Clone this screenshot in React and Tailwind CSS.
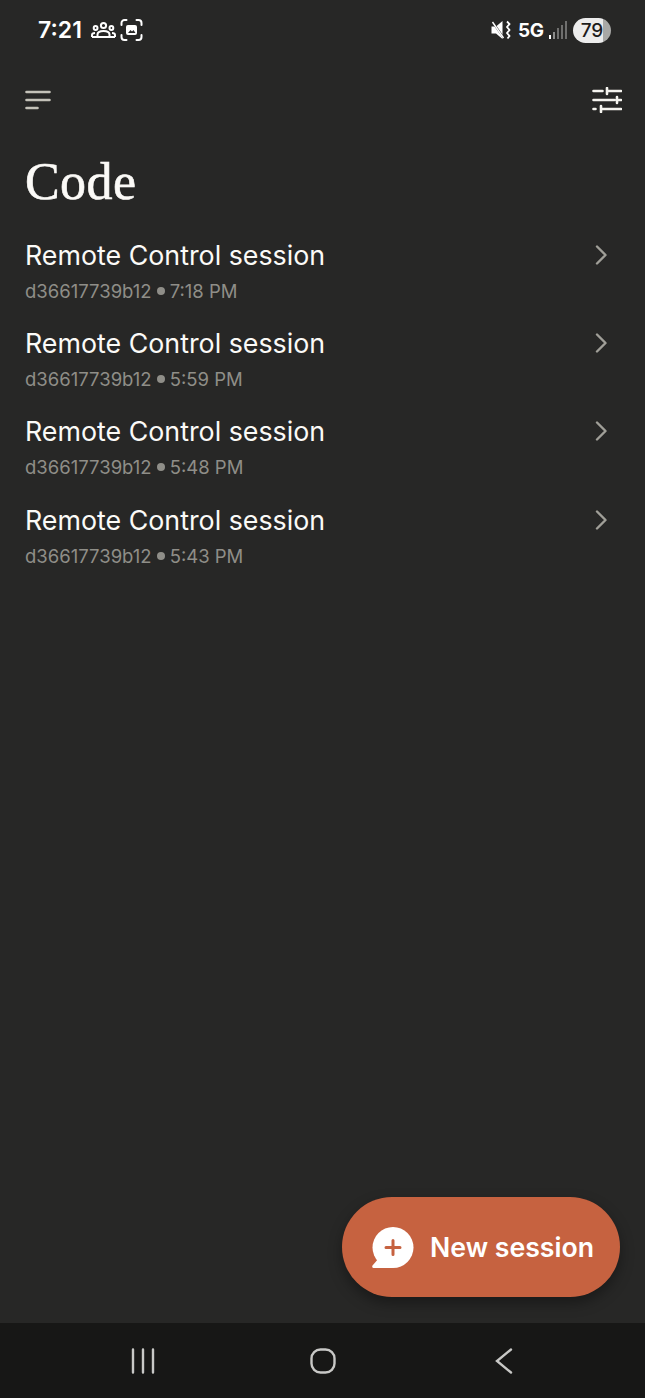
const sessions = [
  { id: 'd36617739b12', time: '7:18 PM' },
  { id: 'd36617739b12', time: '5:59 PM' },
  { id: 'd36617739b12', time: '5:48 PM' },
  { id: 'd36617739b12', time: '5:43 PM' },
]

function StatusBar() {
  return (
    <div className="h-[60px] flex items-center justify-between pl-[38px] pr-[34px] text-white font-['Inter',sans-serif]">
      <div className="flex items-center">
        <span className="text-[23px] font-semibold leading-none">7:21</span>
        {/* group icon */}
        <svg className="ml-[9px]" width="25" height="18" viewBox="0 0 25 18" fill="none" stroke="white" strokeWidth="2">
          <circle cx="12.5" cy="4.5" r="2.6" />
          <circle cx="4.6" cy="7" r="1.9" />
          <circle cx="20.4" cy="7" r="1.9" />
          <path d="M6.5 16v-2.5c0-2 2-3.5 6-3.5s6 1.500 6 3.500V16z" />
          <path d="M1 16v-2c0-1.200 1-2 3-2M24 16v-2c0-1.200-1-2-3-2M1 16h23" />
        </svg>
        {/* screenshot frame */}
        <svg className="ml-[4px]" width="23" height="22" viewBox="0 0 23 22" fill="none" stroke="white" strokeWidth="2" strokeLinecap="round">
          <path d="M1.500 6V4a3 3 0 0 1 3-3h2M16.500 1h2a3 3 0 0 1 3 3v2M21.500 16v2a3 3 0 0 1-3 3h-2M6.500 21h-2a3 3 0 0 1-3-3v-2" />
          <rect x="6" y="6" width="11" height="10" rx="2" fill="white" stroke="none" />
          <path d="M8 14l2.500-3 1.500 1.500 1.500-1.500 2 3z" fill="#272726" stroke="none" />
        </svg>
      </div>
      <div className="flex items-center">
        {/* muted vibrate */}
        <svg width="20" height="20" viewBox="0 0 20 20" fill="white">
          <path d="M0.500 6.500h4.500l6.500-5.500v18l-6.500-5.500H0.500z" />
          <path d="M0.500 0.500l13 18.500" stroke="#272726" strokeWidth="2" />
          <path d="M1.500 2l11 16" stroke="white" strokeWidth="1.400" />
          <path d="M16 1.500l2.500 2.500-2.500 3 2.500 3-2.500 3 2.500 3-2 2.500" fill="none" stroke="white" strokeWidth="1.800" />
        </svg>
        <span className="ml-[7px] text-[19px] font-bold leading-none tracking-[-0.5px]">5G</span>
        <div className="ml-[5px] flex items-end gap-[1.500px] h-[18px]">
          <div className="w-[2.500px] h-[4px] bg-white" />
          <div className="w-[2.500px] h-[7px] bg-[#8c8c8b]" />
          <div className="w-[2.500px] h-[11px] bg-[#6f6f6e]" />
          <div className="w-[2.500px] h-[14px] bg-[#6f6f6e]" />
          <div className="w-[2.500px] h-[18px] bg-[#6f6f6e]" />
        </div>
        <div className="ml-[6px] w-[38px] h-[25px] rounded-full bg-[linear-gradient(90deg,#ececec_78%,#a8a8a6_78%)] flex items-center justify-center text-[#1c1c1c] text-[19px] font-medium leading-none">
          79
        </div>
      </div>
    </div>
  )
}

function SessionRow({ session }) {
  return (
    <div className="h-[88.400px] flex items-start justify-between pr-[33px]">
      <div>
        <div className="text-[26.800px] leading-[36px] text-[#fbfaf7] font-['Inter',sans-serif]">Remote Control session</div>
        <div className="flex items-center text-[18.500px] leading-[36px] text-[#8f8e88] font-['Inter',sans-serif]">
          <span>{session.id}</span>
          <span className="mx-[5px] w-[8px] h-[8px] rounded-full bg-[#8f8e88]" />
          <span>{session.time}</span>
        </div>
      </div>
      <svg className="mt-[8px]" width="20" height="20" viewBox="0 0 20 20" fill="none" stroke="#a09f98" strokeWidth="2.400" strokeLinecap="round" strokeLinejoin="round">
        <path d="M5 1.500L13.500 10 5 18.500" />
      </svg>
    </div>
  )
}

export default function App() {
  return (
    <div className="w-[645px] h-[1398px] bg-[#272726] flex flex-col overflow-hidden">
      <StatusBar />
      <div className="flex-1 flex flex-col">
        <div className="mt-[30px] h-[20px] flex items-center justify-between pl-[25px] pr-[23px]">
          <svg width="26" height="20" viewBox="0 0 26 20" fill="none" stroke="#c4c2b9" strokeWidth="2.600" strokeLinecap="round">
            <path d="M1.500 2h23M1.500 10h23M1.500 18h11" />
          </svg>
          <svg width="30" height="26" viewBox="0 0 30 26" fill="none" stroke="#f5f4ef" strokeWidth="2.600" strokeLinecap="round">
            <path d="M1.500 4h9M15 4h14M15 1v6M1.500 13h21M27 13h2M25 10v6M1.500 22h2M9 22h20M9 19v6" />
          </svg>
        </div>
        <h1 className="mt-[40px] pl-[25px] text-[52px] leading-[64px] text-[#fbfaf7] font-['Liberation_Serif',serif] tracking-[0.4px] [-webkit-text-stroke:0.6px_#fbfaf7]">Code</h1>
        <div className="mt-[22.500px] pl-[25px]">
          {sessions.map((s, i) => <SessionRow key={i} session={s} />)}
        </div>
        <button className="mt-auto mb-[26px] mr-[25px] self-end w-[278px] h-[100px] rounded-full bg-[#c66240] shadow-[0_6px_14px_rgba(0,0,0,0.35)] flex items-center pl-[29px] text-white">
          <svg width="43" height="43" viewBox="0 0 43 43">
            <circle cx="22" cy="21.500" r="20.500" fill="white" />
            <path d="M8 32L1.500 39.500c-0.800 1 0 2.500 1 2.500H22z" fill="white" />
            <path d="M22 14.500v14M15 21.500h14" stroke="#c66240" strokeWidth="3" strokeLinecap="round" />
          </svg>
          <span className="ml-[16px] text-[26.700px] font-semibold font-['Inter',sans-serif] leading-none">New session</span>
        </button>
      </div>
      <div className="h-[75px] bg-[#171716] flex items-center pl-[131px]">
        <svg width="24" height="26" viewBox="0 0 24 26" fill="none" stroke="#c8c8c6" strokeWidth="2.400" strokeLinecap="round">
          <path d="M2 1.500v23M12 1.500v23M22 1.500v23" />
        </svg>
        <svg className="ml-[155px]" width="26" height="26" viewBox="0 0 26 26" fill="none" stroke="#c8c8c6" strokeWidth="2.400">
          <rect x="1.500" y="1.500" width="23" height="23" rx="9" />
        </svg>
        <svg className="ml-[159px]" width="18" height="26" viewBox="0 0 18 26" fill="none" stroke="#c8c8c6" strokeWidth="2.400" strokeLinecap="round">
          <path d="M16 1.500L2 13l14 11.500" />
        </svg>
      </div>
    </div>
  )
}
